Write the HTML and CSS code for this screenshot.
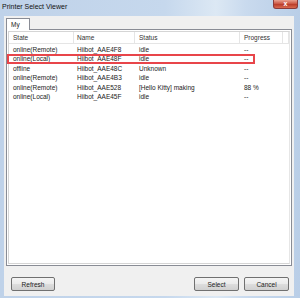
FILE: index.html
```html
<!DOCTYPE html>
<html lang="en">

<head>
    <meta charset="UTF-8">
    <meta name="viewport" content="width=device-width, initial-scale=1.0">
    <title>Printer Select Viewer</title>
    <link rel="stylesheet" href="styles.css">
</head>

<body>

    <div class="window">

        <!-- TITLE BAR -->
        <div class="titlebar">
            <span class="title">Printer Select Viewer</span>
            <div class="close">x</div>
        </div>

        <div class="client">

            <!-- TABS -->
            <div class="tabs">
                <div class="tab">My</div>
            </div>

            <div class="panel">
                <div class="list">
                    <div class="row head">
                        <div class="c1">State</div>
                        <div class="c2">Name</div>
                        <div class="c3">Status</div>
                        <div class="c4">Progress</div>
                        <div class="c5"></div>
                    </div>
                    <div class="rows">
                        <div class="row">
                            <div class="c1">online(Remote)</div>
                            <div class="c2">Hiibot_AAE4F8</div>
                            <div class="c3">idle</div>
                            <div class="c4">--</div>
                        </div>
                        <div class="row marked">
                            <div class="c1">online(Local)</div>
                            <div class="c2">Hiibot_AAE48F</div>
                            <div class="c3">idle</div>
                            <div class="c4">--</div>
                            <div class="redbox"></div>
                        </div>
                        <div class="row">
                            <div class="c1">offline</div>
                            <div class="c2">Hiibot_AAE48C</div>
                            <div class="c3">Unknown</div>
                            <div class="c4">--</div>
                        </div>
                        <div class="row">
                            <div class="c1">online(Remote)</div>
                            <div class="c2">Hiibot_AAE4B3</div>
                            <div class="c3">idle</div>
                            <div class="c4">--</div>
                        </div>
                        <div class="row">
                            <div class="c1">online(Remote)</div>
                            <div class="c2">Hiibot_AAE528</div>
                            <div class="c3">[Hello Kitty] making</div>
                            <div class="c4">88 %</div>
                        </div>
                        <div class="row">
                            <div class="c1">online(Local)</div>
                            <div class="c2">Hiibot_AAE45F</div>
                            <div class="c3">idle</div>
                            <div class="c4">--</div>
                        </div>
                    </div>
                </div>
            </div>

            <!-- BUTTONS -->
            <div class="buttons">
                <button class="btn refresh">Refresh</button>
                <div class="spacer"></div>
                <button class="btn">Select</button>
                <button class="btn">Cancel</button>
            </div>

        </div>
    </div>

</body>

</html>
```

FILE: styles.css
```css
body {
    margin: 0;
    width: 300px;
    height: 298px;
    overflow: hidden;
    font-family: "Liberation Sans", Arial, sans-serif;
    font-size: 6.5px;
    color: #222;
}

.window {
    height: 298px;
    display: flex;
    flex-direction: column;
    background: linear-gradient(90deg, #bfd2e9 0%, #c6d8ed 55%, #dce8f4 72%, #c9daee 82%, #b9cee7 100%);
}

.titlebar {
    height: 16px;
    position: relative;
    flex-shrink: 0;
}

.titlebar .title {
    position: relative;
    left: 2px;
    top: 3px;
    font-size: 7px;
    color: #111;
}

.titlebar .close {
    position: absolute;
    right: 2px;
    top: 0;
    width: 23px;
    height: 8px;
    border: 1px solid #8a3b3b;
    border-top: none;
    border-radius: 0 0 3px 3px;
    background: linear-gradient(#e8a090, #c9513e 50%, #b83a28 51%, #d96a50);
    color: #fff;
    font-size: 7px;
    font-weight: bold;
    line-height: 7px;
    text-align: center;
}

.client {
    flex: 1;
    margin: 0 6px 2px 4px;
    background: #f0f0f0;
    display: flex;
    flex-direction: column;
}

.tabs {
    display: flex;
    padding: 1px 0 0 2px;
    height: 12px;
}

.tab {
    width: 24px;
    height: 12px;
    border: 1px solid #898c95;
    border-bottom: none;
    background: #fff;
    padding-left: 4px;
    line-height: 12px;
    box-sizing: border-box;
    position: relative;
    top: 1px;
    z-index: 1;
}

.panel {
    margin: 0 2px 0 2px;
    height: 237px;
    border: 1px solid #898c95;
    background: #fff;
    box-sizing: border-box;
    padding: 1px;
}

.list {
    height: 100%;
    border: 1px solid #d5d5d5;
    border-right-color: #e6e6e6;
    box-sizing: border-box;
}

.row {
    display: flex;
    height: 9.4px;
    line-height: 9.4px;
    white-space: nowrap;
    position: relative;
}

.row > div {
    padding-left: 4px;
    box-sizing: border-box;
    overflow: hidden;
}

.row.head {
    height: 11px;
    line-height: 11px;
    border-bottom: 1px solid #e5e5e5;
    color: #333;
}

.row.head > div {
    border-right: 1px solid #e5e5e5;
}

.rows {
    padding-top: 1px;
}

.c1 { width: 65px; }
.c2 { width: 61px; padding-left: 3px !important; }
.c3 { width: 105px; }
.c4 { width: 43px; }
.c5 { flex: 1; }

.redbox {
    position: absolute;
    left: -2px;
    top: -0.5px;
    width: 248px;
    height: 10px;
    border: 2px solid #e8454a;
    box-sizing: border-box;
    padding: 0 !important;
}

.buttons {
    display: flex;
    padding: 11px 5px 0 7px;
}

.spacer {
    flex: 1;
}

.btn {
    width: 45px;
    height: 14px;
    margin-left: 5px;
    padding: 0;
    font-family: "Liberation Sans", Arial, sans-serif;
    font-size: 6.5px;
    color: #222;
    border: 1px solid #707070;
    border-radius: 2px;
    background: linear-gradient(#f4f4f4, #ebebeb 48%, #dddddd 52%, #d0d0d0);
}

.btn.refresh {
    margin-left: 0;
    width: 44px;
}
```
